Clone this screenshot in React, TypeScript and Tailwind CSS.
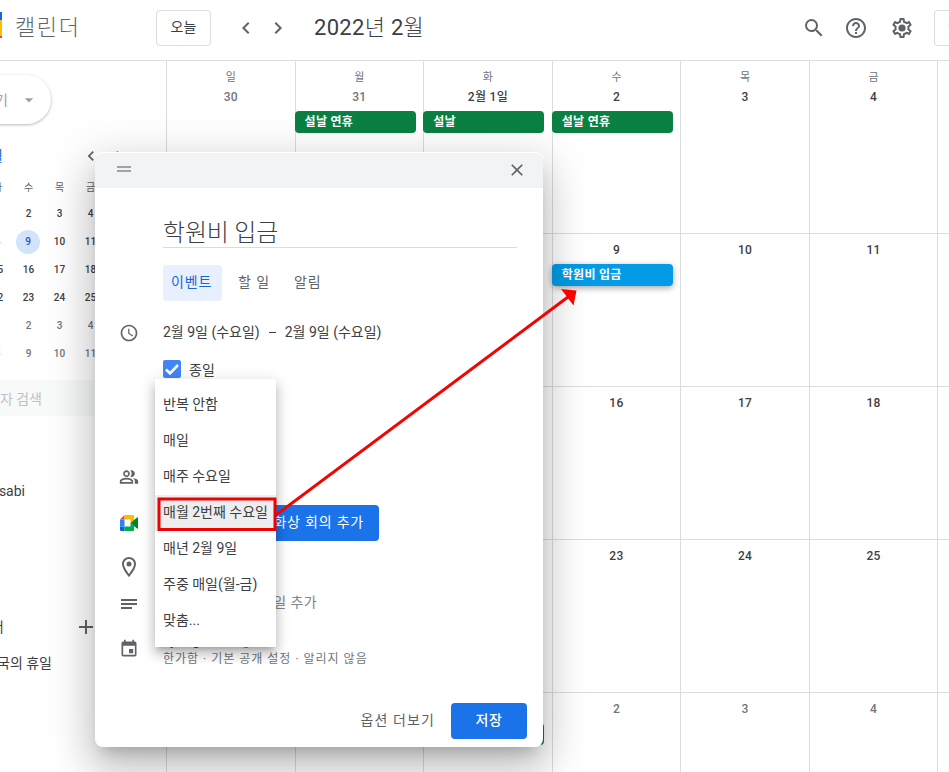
import {
  MdAccessTime,
  MdAdd,
  MdArrowDropDown,
  MdChevronLeft,
  MdChevronRight,
  MdClose,
  MdEvent,
  MdHelpOutline,
  MdOutlineLocationOn,
  MdOutlinePeopleAlt,
  MdSearch,
} from "react-icons/md"

type Day = { label?: string; muted?: boolean; event?: string; color?: string }

const weekdays = ["일", "월", "화", "수", "목", "금", ""]

const weeks: Day[][] = [
  [
    { label: "30", muted: true },
    { label: "31", muted: true, event: "설날 연휴", color: "bg-[#0b8043]" },
    { label: "2월 1일", event: "설날", color: "bg-[#0b8043]" },
    { label: "2", event: "설날 연휴", color: "bg-[#0b8043]" },
    { label: "3" },
    { label: "4" },
    {},
  ],
  [
    {},
    {},
    {},
    { label: "9", event: "학원비 입금", color: "bg-[#039be5] shadow-[0_2px_6px_rgba(0,0,0,0.35)]" },
    { label: "10" },
    { label: "11" },
    {},
  ],
  [{}, {}, {}, { label: "16" }, { label: "17" }, { label: "18" }, {}],
  [{}, {}, {}, { label: "23" }, { label: "24" }, { label: "25" }, {}],
  [
    {},
    {},
    { event: " ", color: "bg-[#0b8043]" },
    { label: "2", muted: true },
    { label: "3", muted: true },
    { label: "4", muted: true },
    {},
  ],
]

const miniWeeks = [
  ["1", "2", "3", "4"],
  ["8", "9", "10", "11"],
  ["15", "16", "17", "18"],
  ["22", "23", "24", "25"],
  ["1", "2", "3", "4"],
  ["8", "9", "10", "11"],
]

const repeatOptions = [
  "반복 안함",
  "매일",
  "매주 수요일",
  "매월 2번째 수요일",
  "매년 2월 9일",
  "주중 매일(월-금)",
  "맞춤...",
]

function SettingsIcon() {
  return (
    <svg viewBox="0 0 24 24" className="size-6" fill="currentColor">
      <path d="M19.43 12.98c.04-.32.07-.64.07-.98 0-.34-.03-.66-.07-.98l2.11-1.65c.19-.15.24-.42.12-.64l-2-3.46a.5.5 0 00-.61-.22l-2.49 1c-.52-.4-1.08-.73-1.69-.98l-.38-2.65A.488.488 0 0014 2h-4c-.25 0-.46.18-.49.42l-.38 2.65c-.61.25-1.17.59-1.69.98l-2.49-1a.566.566 0 00-.18-.03c-.17 0-.34.09-.43.25l-2 3.46c-.13.22-.07.49.12.64l2.11 1.65c-.04.32-.07.65-.07.98 0 .33.03.66.07.98l-2.11 1.65c-.19.15-.24.42-.12.64l2 3.46a.5.5 0 00.61.22l2.49-1c.52.4 1.08.73 1.69.98l.38 2.65c.03.24.24.42.49.42h4c.25 0 .46-.18.49-.42l.38-2.65c.61-.25 1.17-.59 1.69-.98l2.49 1c.06.02.12.03.18.03.17 0 .34-.09.43-.25l2-3.46c.12-.22.07-.49-.12-.64l-2.11-1.65zm-1.98-1.71c.04.31.05.52.05.73 0 .21-.02.43-.05.73l-.14 1.13.89.7 1.08.84-.7 1.21-1.27-.51-1.04-.42-.9.68c-.43.32-.84.56-1.25.73l-1.06.43-.16 1.13-.2 1.35h-1.4l-.19-1.35-.16-1.13-1.06-.43c-.43-.18-.83-.41-1.23-.71l-.91-.7-1.06.43-1.27.51-.7-1.21 1.08-.84.89-.7-.14-1.13c-.03-.31-.05-.54-.05-.74s.02-.43.05-.73l.14-1.13-.89-.7-1.08-.84.7-1.21 1.27.51 1.04.42.9-.68c.43-.32.84-.56 1.25-.73l1.06-.43.16-1.13.2-1.35h1.39l.19 1.35.16 1.13 1.06.43c.43.18.83.41 1.23.71l.91.7 1.06-.43 1.27-.51.7 1.21-1.07.85-.89.7.14 1.13z" />
      <circle cx="12" cy="12" r="3.6" />
    </svg>
  )
}

function MeetIcon() {
  return (
    <svg viewBox="0 0 18 16" className="h-4 w-[18px]">
      <path d="M0 4.5 4.5 0v4.5z" fill="#ea4335" />
      <path d="M4.5 0H13a1.2 1.2 0 0 1 1.2 1.2V6L10.5 8V4.5h-6z" fill="#fbbc04" />
      <path d="M0 4.5h4.5v7H0z" fill="#2684fc" />
      <path d="M0 11.5h4.5V16H1.2A1.2 1.2 0 0 1 0 14.8z" fill="#0066da" />
      <path d="M4.5 11.5h6V8l3.7 3v3.8a1.2 1.2 0 0 1-1.2 1.2H4.5z" fill="#00ac47" />
      <path d="M10.5 8 17 2.4q1-.6 1 .5v10.2q0 1.1-1 .5z" fill="#00832d" />
    </svg>
  )
}

function NotesIcon() {
  return (
    <svg viewBox="0 0 20 20" className="size-5" fill="none" stroke="currentColor" strokeWidth="2">
      <path d="M2 6h16M2 10h16M2 14h11" />
    </svg>
  )
}

function Header() {
  return (
    <header className="flex h-[61px] shrink-0 items-start border-b border-[#dadce0] text-[#5f6368]">
      <div className="mt-3 flex h-[26px] w-[2px] flex-col">
        <div className="h-[8px] bg-[#1967d2]" />
        <div className="flex-1 bg-[#fbbc04]" />
        <div className="h-[2px] bg-[#ea4335]" />
      </div>
      <div className="ml-[13px] h-[56px] w-[141px] text-[22px] leading-[56px] font-light tracking-[1.6px]">캘린더</div>
      <button className="mt-[10px] h-9 w-[55px] rounded border border-[#dadce0] pb-1 text-sm leading-8 text-[#3c4043]">
        오늘
      </button>
      <div className="mt-4 ml-[23px] flex gap-2">
        <MdChevronLeft className="size-6" />
        <MdChevronRight className="size-6" />
      </div>
      <h1 className="ml-6 h-[56px] flex-1 text-[22px] leading-[56px] font-light tracking-[0.3px] text-[#3c4043]">
        <span className="font-normal">2022</span>년 <span className="font-normal">2</span>월
      </h1>
      <div className="mt-4 flex w-[132px] shrink-0 gap-[18px]">
        <MdSearch className="size-6" />
        <MdHelpOutline className="size-6" />
        <div className="ml-1">
          <SettingsIcon />
        </div>
      </div>
      <div className="mt-[10px] h-9 w-[15px] shrink-0 overflow-hidden rounded-l border border-r-0 border-[#dadce0] pl-[13px] text-sm leading-8">
        월
      </div>
    </header>
  )
}

function MiniCalendar() {
  return (
    <div className="-ml-[18px] grid w-[124px] grid-cols-4 text-center text-[10px] font-medium text-[#3c4043]">
      {["화", "수", "목", "금"].map((d) => (
        <div key={d} className="h-[26px] leading-[28px] font-normal text-[#5f6368]">
          {d}
        </div>
      ))}
      {miniWeeks.map((week, w) =>
        week.map((d, i) => (
          <div key={`${w}-${i}`} className={`flex h-7 items-center justify-center ${w > 3 ? "text-[#70757a]" : ""}`}>
            {w === 1 && i === 1 ? (
              <span className="-ml-px size-6 rounded-full bg-[#d2e3fc] leading-6 text-[#185abc]">{d}</span>
            ) : (
              d
            )}
          </div>
        ))
      )}
    </div>
  )
}

function Sidebar() {
  return (
    <aside className="flex w-[166px] shrink-0 flex-col overflow-hidden text-sm text-[#3c4043]">
      <div className="mt-[14px] -ml-6 flex h-[49px] w-[75px] items-center justify-end rounded-r-full pr-3 text-[#9aa0a6] shadow-[0_1px_2px_rgba(60,64,67,0.2),0_1px_3px_1px_rgba(60,64,67,0.12)]">
        <span className="mr-[11px] shrink-0">기</span>
        <MdArrowDropDown className="size-5 shrink-0" />
      </div>
      <div className="mt-[20px] flex h-6 items-center">
        <div className="flex w-[3px] shrink-0 justify-end text-[#1967d2]">월</div>
        <MdChevronLeft className="ml-[78px] size-5 shrink-0 text-[#5f6368]" />
        <MdChevronRight className="ml-2 size-5 shrink-0 text-[#5f6368]" />
      </div>
      <div className="mt-[6px]">
        <MiniCalendar />
      </div>
      <div className="mt-[12px] flex h-9 items-center bg-[#f8f9f9] pt-px text-[#bdc1c6]">
        <div className="flex w-[42px] shrink-0 justify-end whitespace-nowrap">자 검색</div>
      </div>
      <div className="mt-[65px] flex h-5 w-[25px] justify-end leading-5">sabi</div>
      <div className="mt-[114px] flex h-6 items-center">
        <div className="flex w-[4px] shrink-0 justify-end whitespace-nowrap">더</div>
        <MdAdd className="ml-[70px] size-6 text-[#5f6368]" />
      </div>
      <div className="mt-[12px] flex h-6 w-[52px] items-center justify-end whitespace-nowrap">국의 휴일</div>
    </aside>
  )
}

function MonthGrid() {
  return (
    <main className="w-[900px] shrink-0 text-xs">
      {weeks.map((week, w) => (
        <div key={w} className={`grid grid-cols-7 border-b border-[#dadce0] ${w === 0 ? "h-[173px]" : "h-[153px]"}`}>
          {week.map((day, i) => (
            <div key={i} className="border-l border-[#dadce0] pt-[6px] pr-[7.4px]">
              {w === 0 && (
                <div className="-mr-[7.4px] h-5 text-center text-[11px] leading-[22px] text-[#70757a]">
                  {weekdays[i]}
                </div>
              )}
              <div
                className={`-mr-[7.4px] h-5 text-center leading-5 font-medium tracking-[0.3px] ${day.muted ? "text-[#70757a]" : "text-[#3c4043]"}`}
              >
                {day.label}
              </div>
              {day.event && (
                <div
                  className={`mt-1 -ml-px h-[22px] rounded pl-[10px] leading-[23px] font-bold tracking-[0.3px] text-white ${day.color}`}
                >
                  {day.event}
                </div>
              )}
            </div>
          ))}
        </div>
      ))}
    </main>
  )
}

function RepeatMenu() {
  return (
    <div className="absolute top-[227px] left-[60px] w-[121px] bg-white py-2 shadow-[0_8px_10px_1px_rgba(0,0,0,0.14),0_3px_14px_2px_rgba(0,0,0,0.12),0_5px_5px_-3px_rgba(0,0,0,0.2)]">
      {repeatOptions.map((option, i) => (
        <div
          key={option}
          className={`h-9 pl-2 text-sm leading-[34px] whitespace-nowrap text-[#3c4043] ${i === 3 ? "bg-[#eeeeee]" : ""}`}
        >
          {option}
        </div>
      ))}
    </div>
  )
}

function EventDialog() {
  return (
    <div className="absolute top-[152px] left-[95px] h-[595px] w-[448px] rounded-lg bg-white text-sm text-[#3c4043] shadow-[0_24px_38px_3px_rgba(0,0,0,0.14),0_9px_46px_8px_rgba(0,0,0,0.12),0_11px_15px_-7px_rgba(0,0,0,0.2)]">
      <div className="flex h-9 items-center justify-between rounded-t-lg border-t border-white bg-[#f1f3f4] pr-4 pb-[2px] pl-[22px] text-[#5f6368]">
        <div className="mb-px flex w-[14px] flex-col gap-[2px]">
          <div className="h-[2px] bg-[#a0a4a8]" />
          <div className="h-[2px] bg-[#a0a4a8]" />
        </div>
        <MdClose className="size-5" />
      </div>

      <div className="mt-[25px] mr-[26px] ml-[68px] h-[35px] border-b border-[#dadce0] text-[24px] leading-[41px] font-light tracking-[-0.2px]">
        학원비 입금
      </div>
      <div className="mt-[17px] ml-[68px] flex h-9 leading-[34px] tracking-[0.9px] text-[#5f6368]">
        <div className="w-[59px] rounded bg-[#e8f0fe] pl-2 text-[#1967d2]">이벤트</div>
        <div className="ml-4">할 일</div>
        <div className="ml-6">알림</div>
      </div>

      <div className="mt-[21px] flex h-5 items-center pl-6">
        <MdAccessTime className="mt-px size-5 text-[#5f6368]" />
        <div className="ml-6 leading-5">2월 9일 (수요일)</div>
        <div className="ml-[9px] h-[1px] w-[7px] bg-[#3c4043]" />
        <div className="ml-[9px] leading-5">2월 9일 (수요일)</div>
      </div>
      <div className="mt-[18px] ml-[68px] flex h-[18px] items-center">
        <div className="flex size-[18px] items-center justify-center rounded-[2px] bg-[#4285f4]">
          <svg viewBox="0 0 18 18" className="size-[18px]" fill="none" stroke="white" strokeWidth="2.6">
            <path d="M3 9.5 7 13.3 15 5" />
          </svg>
        </div>
        <span className="mt-[2px] ml-2">종일</span>
      </div>

      <div className="mt-[89px] ml-6 h-5">
        <MdOutlinePeopleAlt className="size-5 text-[#5f6368]" />
      </div>
      <div className="mt-[18px] ml-[25px] flex h-9 items-center">
        <MeetIcon />
        <div className="ml-[25px] h-9 w-[216px] rounded bg-[#1a73e8] pr-[15px] text-right leading-[34px] tracking-[0.8px] text-white">
          화상 회의 추가
        </div>
      </div>
      <MdOutlineLocationOn className="mt-[14px] ml-[22px] size-6 text-[#5f6368]" />
      <div className="mt-[15px] ml-6 flex h-5 items-center text-[#5f6368]">
        <NotesIcon />
        <div className="mb-[4px] flex w-[178px] justify-end leading-5 tracking-[0.4px] text-[#80868b]">일 추가</div>
      </div>
      <div className="mt-4 ml-6 flex h-[38px]">
        <MdEvent className="mt-[9px] size-5 text-[#5f6368]" />
        <div className="ml-6">
          <div className="flex h-5 items-center">
            <span className="w-[78px] leading-5">kyung</span>
            <span className="mt-[6px] size-[10px] rounded-full bg-[#039be5]" />
          </div>
          <div className="-mt-px text-xs leading-5 tracking-[1px] whitespace-nowrap text-[#70757a]">
            한가함 · 기본 공개 설정 · 알리지 않음
          </div>
        </div>
      </div>

      <div className="mt-[35px] mr-4 flex h-9 items-center justify-end leading-[34px]">
        <div className="mr-4 h-9 tracking-[1.1px] text-[#5f6368]">옵션 더보기</div>
        <div className="h-9 w-[76px] rounded bg-[#1a73e8] text-center font-medium tracking-[0.5px] text-white">저장</div>
      </div>

      <RepeatMenu />
    </div>
  )
}

// red frame around the chosen option and the arrow to the created event
function Annotation() {
  return (
    <svg className="pointer-events-none absolute inset-0" width="949" height="772" fill="none">
      <rect x="159" y="499" width="116" height="30.5" stroke="#f00000" strokeWidth="3" />
      <path d="M276 515 568 297" stroke="#f00505" strokeWidth="3" />
      <path d="M561 289 576.5 290.5 573.5 305.5z" fill="#ff0000" />
    </svg>
  )
}

export default function App() {
  return (
    <div className="relative flex h-[772px] w-[949px] flex-col overflow-hidden bg-white font-[Roboto,'Noto_Sans_CJK_KR',sans-serif]">
      <Header />
      <div className="flex min-h-0 flex-1">
        <Sidebar />
        <MonthGrid />
      </div>
      <EventDialog />
      <Annotation />
    </div>
  )
}
